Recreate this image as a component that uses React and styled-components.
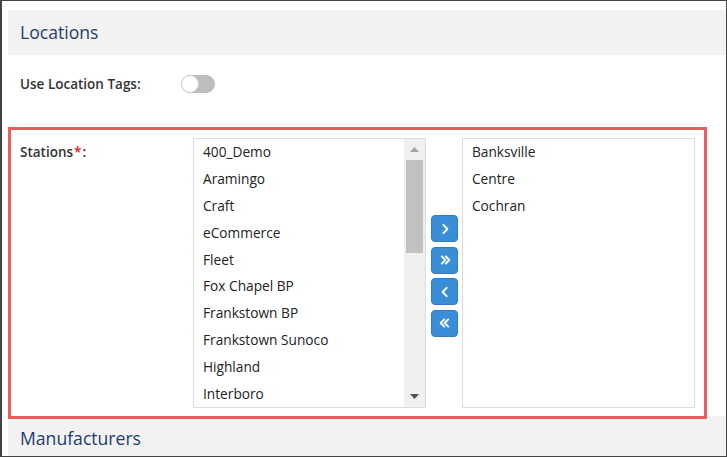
import React from "react";
import styled, { createGlobalStyle } from "styled-components";

const GlobalStyle = createGlobalStyle`
  html, body {
    margin: 0;
    padding: 0;
    background: #ffffff;
  }
  body {
    font-family: "Open Sans", "Liberation Sans", Arial, sans-serif;
  }
  * {
    box-sizing: border-box;
  }
`;

const stations = [
  "400_Demo",
  "Aramingo",
  "Craft",
  "eCommerce",
  "Fleet",
  "Fox Chapel BP",
  "Frankstown BP",
  "Frankstown Sunoco",
  "Highland",
  "Interboro",
];

const selected = ["Banksville", "Centre", "Cochran"];

const Window = styled.div`
  width: 727px;
  height: 457px;
  border: 1px solid #444444;
  border-left-width: 2px;
  padding: 9px 0 0 6px;
  overflow: hidden;
  background: #ffffff;
`;

const SectionBar = styled.div`
  height: 45px;
  background: #f2f2f2;
  display: flex;
  align-items: center;
  padding-left: 12px;
  padding-bottom: 1px;
  font-size: 17.6px;
  color: #1f3d6d;
`;

const FieldRow = styled.div`
  display: flex;
  align-items: center;
  padding-left: 12px;
  margin: ${(p) => p.$margin || "0"};
`;

const Label = styled.div`
  width: ${(p) => p.$width}px;
  flex-shrink: 0;
  font-size: 13.5px;
  font-weight: 600;
  color: #333333;
  line-height: 18px;
  padding-top: ${(p) => p.$pad || 0}px;
`;

const Required = styled.span`
  color: #e02020;
  padding: 0 1px;
`;

const Toggle = styled.div`
  width: 34px;
  height: 18px;
  border-radius: 9px;
  background: #bdbdbd;
  display: flex;
  align-items: center;
`;

const Knob = styled.div`
  width: 18px;
  height: 18px;
  border-radius: 50%;
  background: #ffffff;
  border: 1px solid #d0d0d0;
`;

const HighlightRow = styled.div`
  display: flex;
  align-items: flex-start;
  margin: 0 22px 0 3px;
  padding: 8px 9px;
  outline: 3px solid #ee5b5e;
`;

const DualList = styled.div`
  display: flex;
  align-items: center;
`;

const ListBox = styled.div`
  width: 233px;
  height: 270px;
  border: 1px solid #dcdcdc;
  display: flex;
  background: #ffffff;
`;

const Items = styled.div`
  flex: 1;
  overflow: hidden;
`;

const Item = styled.div`
  height: 26.9px;
  line-height: 26px;
  padding-left: 9px;
  font-size: 13.7px;
  color: #222222;
  white-space: nowrap;
`;

const ScrollTrack = styled.div`
  width: 21px;
  height: 100%;
  background: #f0f0f0;
  display: flex;
  flex-direction: column;
  align-items: center;
`;

const ScrollArrow = styled.div`
  height: 21px;
  width: 100%;
  display: flex;
  align-items: center;
  justify-content: center;
`;

const ScrollThumb = styled.div`
  width: 17px;
  height: 93px;
  background: #c1c1c1;
`;

const ScrollSpacer = styled.div`
  flex: 1;
`;

const ButtonColumn = styled.div`
  display: flex;
  flex-direction: column;
  gap: 4.6px;
  margin: 6px 4px 0 5px;
`;

const MoveButton = styled.div`
  width: 27px;
  height: 27px;
  border-radius: 4px;
  background: #3a8ed8;
  border: 1px solid #2d7cc4;
  display: flex;
  align-items: center;
  justify-content: center;
`;

const Chevron = ({ dir, double }) => {
  const flip = dir === "left" ? "scale(-1,1) translate(-12,0)" : undefined;
  return (
    <svg width="12" height="12" viewBox="0 0 12 12">
      <g
        transform={flip}
        fill="none"
        stroke="#ffffff"
        strokeWidth="1.9"
        strokeLinecap="round"
        strokeLinejoin="round"
      >
        {double ? (
          <path d="M2.8 2.4L6.3 6L2.8 9.6M6.8 2.4L10.3 6L6.8 9.6" />
        ) : (
          <path d="M4.4 1.8L8.4 6L4.4 10.2" />
        )}
      </g>
    </svg>
  );
};

const App = () => {
  return (
    <>
      <GlobalStyle />
      <Window>
        <SectionBar>Locations</SectionBar>

        <FieldRow $margin="20px 0 37px 0">
          <Label $width={161}>Use Location Tags:</Label>
          <Toggle>
            <Knob />
          </Toggle>
        </FieldRow>

        <HighlightRow>
          <Label $width={173} $pad={5}>
            Stations<Required>*</Required>:
          </Label>
          <DualList>
            <ListBox>
              <Items>
                {stations.map((s) => (
                  <Item key={s}>{s}</Item>
                ))}
              </Items>
              <ScrollTrack>
                <ScrollArrow>
                  <svg width="9" height="5" viewBox="0 0 9 5">
                    <path d="M0 5L4.5 0L9 5Z" fill="#a3a3a3" />
                  </svg>
                </ScrollArrow>
                <ScrollThumb />
                <ScrollSpacer />
                <ScrollArrow>
                  <svg width="9" height="5" viewBox="0 0 9 5">
                    <path d="M0 0L9 0L4.5 5Z" fill="#505050" />
                  </svg>
                </ScrollArrow>
              </ScrollTrack>
            </ListBox>

            <ButtonColumn>
              <MoveButton>
                <Chevron dir="right" />
              </MoveButton>
              <MoveButton>
                <Chevron dir="right" double />
              </MoveButton>
              <MoveButton>
                <Chevron dir="left" />
              </MoveButton>
              <MoveButton>
                <Chevron dir="left" double />
              </MoveButton>
            </ButtonColumn>

            <ListBox>
              <Items>
                {selected.map((s) => (
                  <Item key={s}>{s}</Item>
                ))}
              </Items>
            </ListBox>
          </DualList>
        </HighlightRow>

        <SectionBar>Manufacturers</SectionBar>
      </Window>
    </>
  );
};

export default App;
